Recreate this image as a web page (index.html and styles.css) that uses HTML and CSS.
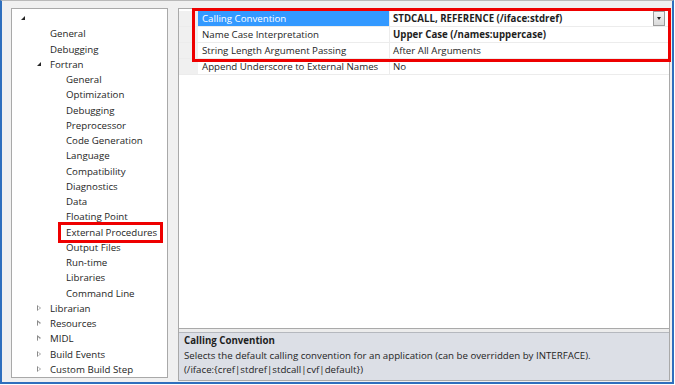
FILE: index.html
```html
<!DOCTYPE html>
<html lang="en">

<head>
    <meta charset="UTF-8">
    <meta name="viewport" content="width=device-width, initial-scale=1.0">
    <title>Property Pages</title>
    <link rel="stylesheet" href="styles.css">
</head>

<body>
    <div class="frame">
        <div class="tree">
            <div class="node lv0"><span class="tw open"></span></div>
            <div class="node lv1"><span class="tw"></span>General</div>
            <div class="node lv1"><span class="tw"></span>Debugging</div>
            <div class="node lv1"><span class="tw open"></span>Fortran</div>
            <div class="node lv2"><span class="tw"></span>General</div>
            <div class="node lv2"><span class="tw"></span>Optimization</div>
            <div class="node lv2"><span class="tw"></span>Debugging</div>
            <div class="node lv2"><span class="tw"></span>Preprocessor</div>
            <div class="node lv2"><span class="tw"></span>Code Generation</div>
            <div class="node lv2"><span class="tw"></span>Language</div>
            <div class="node lv2"><span class="tw"></span>Compatibility</div>
            <div class="node lv2"><span class="tw"></span>Diagnostics</div>
            <div class="node lv2"><span class="tw"></span>Data</div>
            <div class="node lv2"><span class="tw"></span>Floating Point</div>
            <div class="node lv2"><span class="tw"></span>External Procedures</div>
            <div class="node lv2"><span class="tw"></span>Output Files</div>
            <div class="node lv2"><span class="tw"></span>Run-time</div>
            <div class="node lv2"><span class="tw"></span>Libraries</div>
            <div class="node lv2"><span class="tw"></span>Command Line</div>
            <div class="node lv1"><span class="tw closed"></span>Librarian</div>
            <div class="node lv1"><span class="tw closed"></span>Resources</div>
            <div class="node lv1"><span class="tw closed"></span>MIDL</div>
            <div class="node lv1"><span class="tw closed"></span>Build Events</div>
            <div class="node lv1"><span class="tw closed"></span>Custom Build Step</div>
        </div>

        <div class="props">
            <div class="grid">
                <div class="row">
                    <div class="gut"></div>
                    <div class="name sel">Calling Convention</div>
                    <div class="val bold">STDCALL, REFERENCE (/iface:stdref)<span class="drop"></span></div>
                </div>
                <div class="row">
                    <div class="gut"></div>
                    <div class="name">Name Case Interpretation</div>
                    <div class="val bold">Upper Case (/names:uppercase)</div>
                </div>
                <div class="row">
                    <div class="gut"></div>
                    <div class="name">String Length Argument Passing</div>
                    <div class="val">After All Arguments</div>
                </div>
                <div class="row">
                    <div class="gut"></div>
                    <div class="name">Append Underscore to External Names</div>
                    <div class="val">No</div>
                </div>
            </div>
            <div class="desc">
                <div class="desc-title">Calling Convention</div>
                <div>Selects the default calling convention for an application (can be overridden by INTERFACE).</div>
                <div>(/iface:{cref|stdref|stdcall|cvf|default})</div>
            </div>
        </div>

        <div class="mark mark-grid"></div>
        <div class="mark mark-tree"></div>
    </div>
</body>

</html>
```

FILE: styles.css
```css
* {
    padding: 0;
    margin: 0;
    box-sizing: border-box;
}

body {
    width: 675px;
    height: 385px;
    background: #fff;
    font-family: "Open Sans", "Noto Sans", sans-serif;
    font-size: 9.7px;
    color: #1e1e1e;
}

.frame {
    position: relative;
    width: 674px;
    height: 384px;
    background: #f0f0f0;
    border: 2px solid #2f6fbd;
    border-top: 1px solid #b9b9b9;
    padding: 7px 2px 2px 9px;
    display: flex;
    gap: 10px;
}

/* tree */
.tree {
    width: 157px;
    height: 370px;
    background: #fff;
    border: 1px solid #a9a9a9;
    padding-top: 2px;
}

.node {
    height: 15.26px;
    line-height: 15.26px;
    display: flex;
    align-items: center;
    white-space: nowrap;
}

.lv0 {
    padding-left: 8px;
}

.lv1 {
    padding-left: 24px;
}

.lv2 {
    padding-left: 40px;
}

.tw {
    width: 14px;
    height: 15px;
    flex: none;
    position: relative;
}

.tw.open::before {
    content: "";
    position: absolute;
    left: 1px;
    top: 5px;
    border-style: solid;
    border-width: 0 0 4px 4px;
    border-color: transparent transparent #262626 transparent;
}

.tw.closed::before {
    content: "";
    position: absolute;
    left: 1px;
    top: 4px;
    width: 0;
    height: 0;
    border-style: solid;
    border-width: 3.5px 0 3.5px 4px;
    border-color: transparent transparent transparent #8a8a8a;
}

.tw.closed::after {
    content: "";
    position: absolute;
    left: 2px;
    top: 5.5px;
    border-style: solid;
    border-width: 2px 0 2px 2px;
    border-color: transparent transparent transparent #fff;
}

/* property grid */
.props {
    width: 492px;
    height: 373px;
    background: #fff;
    border: 1px solid #a9a9a9;
    display: flex;
    flex-direction: column;
}

.grid {
    flex: 1;
    padding-top: 2px;
}

.row {
    display: flex;
    height: 16px;
    line-height: 15px;
    border-bottom: 1px solid #ececec;
    white-space: nowrap;
}

.gut {
    width: 19px;
    background: #f0f0f0;
}

.name {
    width: 192px;
    padding-left: 4px;
    border-right: 1px solid #ececec;
}

.name.sel {
    background: #3399ff;
    color: #fff;
}

.val {
    flex: 1;
    padding-left: 3px;
    position: relative;
}

.bold {
    font-weight: bold;
}

.drop {
    position: absolute;
    right: 4px;
    top: 0;
    width: 12px;
    height: 15px;
    border: 1px solid #9c9c9c;
    background: linear-gradient(#f4f4f4, #dadada);
}

.drop::before {
    content: "";
    position: absolute;
    left: 3px;
    top: 5px;
    border-style: solid;
    border-width: 3px 2.5px 0 2.5px;
    border-color: #222 transparent transparent transparent;
}

.desc {
    height: 52px;
    background: #dcdfe6;
    border-top: 1px solid #a9a9a9;
    box-shadow: inset 0 3px 0 #ececec, inset 0 4px 0 #b5b8be;
    padding: 5px 0 0 5px;
    line-height: 14.5px;
}

.desc-title {
    font-weight: bold;
}

/* red highlight boxes */
.mark {
    position: absolute;
    border: 3px solid #ee0000;
}

.mark-grid {
    left: 190px;
    top: 7px;
    width: 479px;
    height: 54px;
}

.mark-tree {
    left: 56px;
    top: 221px;
    width: 105px;
    height: 21px;
}
```
